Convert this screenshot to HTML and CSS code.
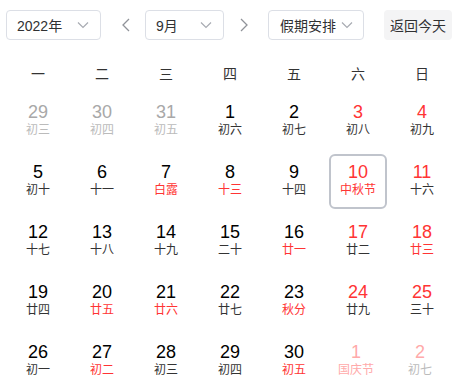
FILE: index.html
```html
<!DOCTYPE html>
<html lang="zh-CN">
  <head>
    <meta name="viewport" content="width=device-width, initial-scale=1.0" />
    <title>日历</title>
    <link rel="stylesheet" href="styles.css">
  </head>
  <body>
    <div class="calendar">
      <div class="toolbar">
        <div class="select year-select">
          <span>2022年</span>
          <svg class="chevron" width="12" height="8" viewBox="0 0 12 8"><path d="M1 1.5l5 5 5-5" fill="none" stroke="#a8abb2" stroke-width="1.2"/></svg>
        </div>
        <span class="arrow prev">
          <svg width="8" height="14" viewBox="0 0 8 14"><path d="M7 1L1 7l6 6" fill="none" stroke="#909399" stroke-width="1.3"/></svg>
        </span>
        <div class="select month-select">
          <span>9月</span>
          <svg class="chevron" width="12" height="8" viewBox="0 0 12 8"><path d="M1 1.5l5 5 5-5" fill="none" stroke="#a8abb2" stroke-width="1.2"/></svg>
        </div>
        <span class="arrow next">
          <svg width="8" height="14" viewBox="0 0 8 14"><path d="M1 1l6 6-6 6" fill="none" stroke="#909399" stroke-width="1.3"/></svg>
        </span>
        <div class="select holiday-select">
          <span>假期安排</span>
          <svg class="chevron" width="12" height="8" viewBox="0 0 12 8"><path d="M1 1.5l5 5 5-5" fill="none" stroke="#a8abb2" stroke-width="1.2"/></svg>
        </div>
        <button class="today-btn">返回今天</button>
      </div>

      <div class="weekdays">
        <span>一</span><span>二</span><span>三</span><span>四</span><span>五</span><span>六</span><span>日</span>
      </div>

      <div class="days">
        <div class="day other"><span class="num">29</span><span class="lunar">初三</span></div>
        <div class="day other"><span class="num">30</span><span class="lunar">初四</span></div>
        <div class="day other"><span class="num">31</span><span class="lunar">初五</span></div>
        <div class="day"><span class="num">1</span><span class="lunar">初六</span></div>
        <div class="day"><span class="num">2</span><span class="lunar">初七</span></div>
        <div class="day weekend"><span class="num">3</span><span class="lunar">初八</span></div>
        <div class="day weekend"><span class="num">4</span><span class="lunar">初九</span></div>

        <div class="day"><span class="num">5</span><span class="lunar">初十</span></div>
        <div class="day"><span class="num">6</span><span class="lunar">十一</span></div>
        <div class="day festival"><span class="num">7</span><span class="lunar">白露</span></div>
        <div class="day festival"><span class="num">8</span><span class="lunar">十三</span></div>
        <div class="day"><span class="num">9</span><span class="lunar">十四</span></div>
        <div class="day weekend festival today"><span class="num">10</span><span class="lunar">中秋节</span></div>
        <div class="day weekend"><span class="num">11</span><span class="lunar">十六</span></div>

        <div class="day"><span class="num">12</span><span class="lunar">十七</span></div>
        <div class="day"><span class="num">13</span><span class="lunar">十八</span></div>
        <div class="day"><span class="num">14</span><span class="lunar">十九</span></div>
        <div class="day"><span class="num">15</span><span class="lunar">二十</span></div>
        <div class="day festival"><span class="num">16</span><span class="lunar">廿一</span></div>
        <div class="day weekend"><span class="num">17</span><span class="lunar">廿二</span></div>
        <div class="day weekend festival"><span class="num">18</span><span class="lunar">廿三</span></div>

        <div class="day"><span class="num">19</span><span class="lunar">廿四</span></div>
        <div class="day festival"><span class="num">20</span><span class="lunar">廿五</span></div>
        <div class="day festival"><span class="num">21</span><span class="lunar">廿六</span></div>
        <div class="day"><span class="num">22</span><span class="lunar">廿七</span></div>
        <div class="day festival"><span class="num">23</span><span class="lunar">秋分</span></div>
        <div class="day weekend"><span class="num">24</span><span class="lunar">廿九</span></div>
        <div class="day weekend"><span class="num">25</span><span class="lunar">三十</span></div>

        <div class="day"><span class="num">26</span><span class="lunar">初一</span></div>
        <div class="day festival"><span class="num">27</span><span class="lunar">初二</span></div>
        <div class="day"><span class="num">28</span><span class="lunar">初三</span></div>
        <div class="day"><span class="num">29</span><span class="lunar">初四</span></div>
        <div class="day festival"><span class="num">30</span><span class="lunar">初五</span></div>
        <div class="day next festival"><span class="num">1</span><span class="lunar">国庆节</span></div>
        <div class="day next"><span class="num">2</span><span class="lunar">初七</span></div>
      </div>
    </div>
  </body>
</html>
```

FILE: styles.css
```css
* {
  padding: 0;
  margin: 0;
  box-sizing: border-box;
}
body {
  font-family: "Liberation Sans", "Noto Sans CJK SC", sans-serif;
  background-color: #ffffff;
  color: #000;
}
.calendar {
  width: 464px;
  padding: 10px 10px 0 6px;
}
.toolbar {
  display: flex;
  align-items: center;
  height: 30px;
}
.select {
  display: flex;
  align-items: center;
  justify-content: space-between;
  height: 30px;
  border: 1px solid #dcdfe6;
  border-radius: 4px;
  padding: 0 11px 0 10px;
  font-size: 14px;
  color: #303133;
}
.year-select {
  width: 95px;
}
.month-select {
  width: 79px;
}
.holiday-select {
  width: 96px;
  padding-left: 11px;
  padding-right: 10px;
}
.arrow {
  display: flex;
  align-items: center;
  justify-content: center;
  width: 44px;
  height: 30px;
}
.prev {
  padding-left: 5px;
}
.next {
  padding-right: 4px;
}
.today-btn {
  margin-left: 20px;
  width: 68px;
  height: 30px;
  border: none;
  border-radius: 4px;
  background: #f4f4f5;
  font-family: inherit;
  font-size: 14px;
  color: #303133;
}
.weekdays {
  display: grid;
  grid-template-columns: repeat(7, 64px);
  margin-top: 13px;
  height: 40px;
  align-items: center;
  font-size: 14px;
  color: #333;
  text-align: center;
}
.days {
  display: grid;
  grid-template-columns: repeat(7, 64px);
  grid-auto-rows: 60px;
  margin-top: 1px;
}
.day {
  width: 58px;
  height: 55px;
  margin: 0 auto;
  display: flex;
  flex-direction: column;
  align-items: center;
  padding-top: 7px;
  border: 2px solid transparent;
  border-radius: 6px;
}
.num {
  font-size: 18px;
  line-height: 22px;
  height: 22px;
  margin-top: -2px;
}
.lunar {
  font-size: 12px;
  line-height: 16px;
  color: #333;
  margin-top: -1px;
}
.weekend .num {
  color: #ff3434;
}
.festival .lunar {
  color: #ff3434;
}
.other .num {
  color: #a8a8a8;
}
.other .lunar {
  color: #bbbbbb;
}
.next .num {
  color: #ffaaaa;
}
.next .lunar {
  color: #bbbbbb;
}
.next.festival .lunar {
  color: #ffaaaa;
}
.today {
  border-color: #c0c4cc;
}
```
